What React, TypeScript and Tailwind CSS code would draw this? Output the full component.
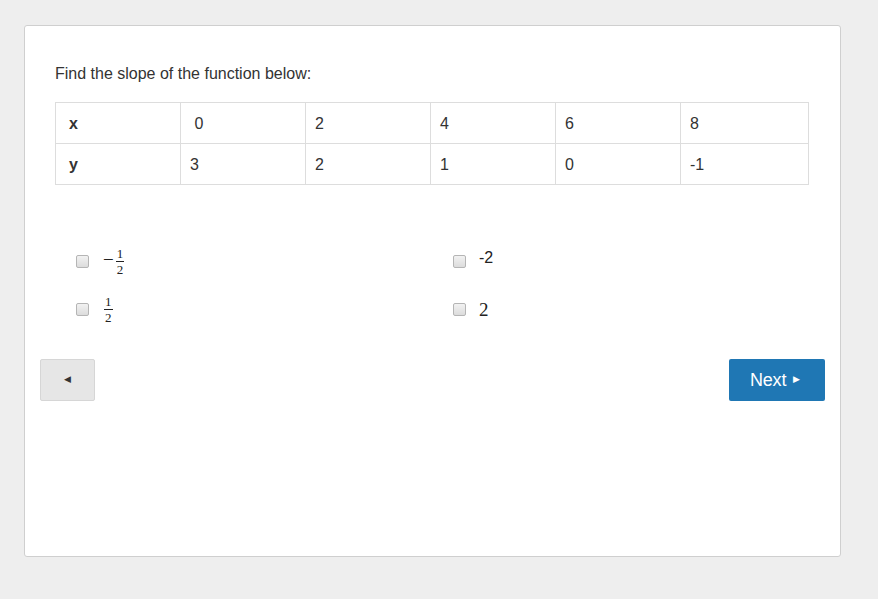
import React from "react";

const Box = () => (
  <span className="inline-block w-[13px] h-[13px] rounded-[2px] border border-[#b5b5b5] bg-gradient-to-b from-[#f2f2f2] to-[#dcdcdc]" />
);

const Frac = () => (
  <span className="inline-flex flex-col items-center leading-none text-[13px] font-['Liberation_Serif','DejaVu_Serif',serif] text-[#222]">
    <span className="px-[1px] border-b border-[#222] pb-[1px]">1</span>
    <span className="pt-[1px]">2</span>
  </span>
);

export default function App() {
  const xs = ["x", "\u00a00", "2", "4", "6", "8"];
  const ys = ["y", "3", "2", "1", "0", "-1"];
  return (
    <div className="min-h-[599px] w-full bg-[#eeeeee] pt-[25px] pl-[24px] font-['Liberation_Sans',Arial,sans-serif] text-[#333]">
      <div className="w-[817px] h-[532px] bg-white border border-[#cfcfcf] rounded-[3px]">
        <div className="pt-[37px] px-[30px]">
          <div className="text-[16px] leading-[22px]">Find the slope of the function below:</div>
          <table className="mt-[17px] w-[754px] border-collapse text-[16px] table-fixed">
            <colgroup>
              <col className="w-[125px]" />
              <col className="w-[125px]" />
              <col className="w-[125px]" />
              <col className="w-[125px]" />
              <col className="w-[125px]" />
              <col />
            </colgroup>
            <tbody>
              {[xs, ys].map((row, ri) => (
                <tr key={ri} className="h-[41px]">
                  {row.map((c, ci) => (
                    <td
                      key={ci}
                      className={
                        "border border-[#dddddd] align-middle pt-[2px] " +
                        (ci === 0 ? "pl-[13px] font-bold" : "pl-[9px]")
                      }
                    >
                      {c}
                    </td>
                  ))}
                </tr>
              ))}
            </tbody>
          </table>
          <div className="mt-[60px] grid grid-cols-2 gap-y-[16px] w-[754px]">
            <div className="h-[32px] flex items-center pl-[21px]">
              <Box />
              <span className="ml-[14px] flex items-center text-[#222]">
                <span className="font-['Liberation_Serif','DejaVu_Serif',serif] text-[19px] mr-[2px] -mt-[1px]">−</span>
                <Frac />
              </span>
            </div>
            <div className="h-[32px] flex items-center pl-[21px]">
              <Box />
              <span className="ml-[13px] text-[16px] text-[#222] -mt-[6px]">-2</span>
            </div>
            <div className="h-[32px] flex items-center pl-[21px]">
              <Box />
              <span className="ml-[15px] flex items-center">
                <Frac />
              </span>
            </div>
            <div className="h-[32px] flex items-center pl-[21px]">
              <Box />
              <span className="ml-[13px] text-[19px] text-[#222] font-['Liberation_Serif','DejaVu_Serif',serif] mt-[2px]">2</span>
            </div>
          </div>
        </div>
        <div className="mt-[34px] px-[15px] flex justify-between">
          <button className="w-[55px] h-[42px] bg-[#e6e6e6] border border-[#d6d6d6] rounded-[2px] flex items-center justify-center text-[#333] text-[9px]">
            ◀
          </button>
          <button className="w-[96px] h-[42px] bg-[#1f77b4] rounded-[2px] flex items-center justify-center text-white text-[18px] tracking-[-0.2px] pr-[4px]">
            Next<span className="ml-[7px] text-[9px]">▶</span>
          </button>
        </div>
      </div>
    </div>
  );
}
